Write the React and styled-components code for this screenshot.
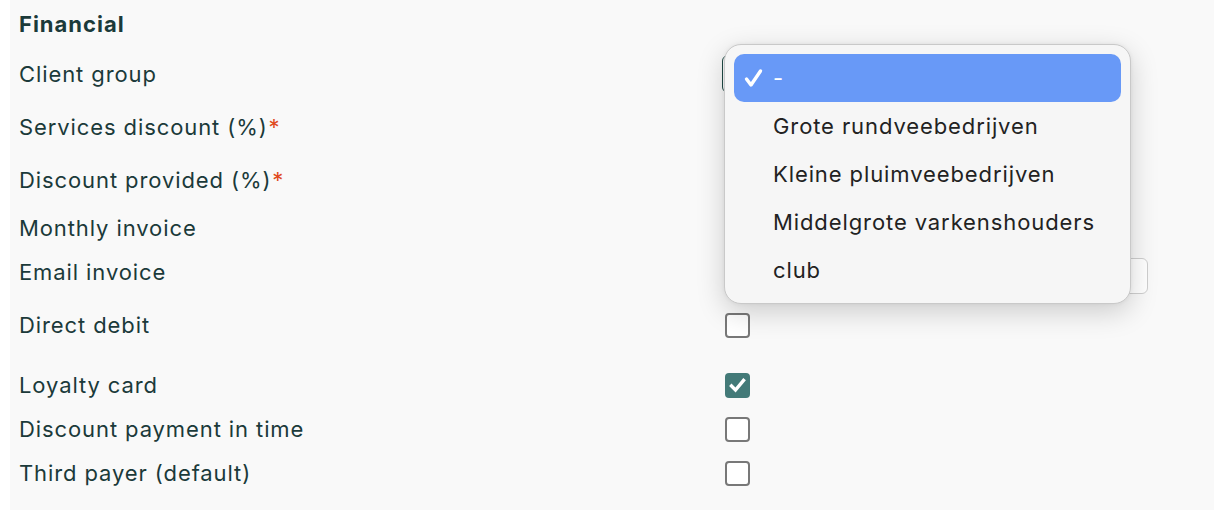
import React from "react";
import styled, { createGlobalStyle } from "styled-components";

const Global = createGlobalStyle`
  html, body { margin: 0; padding: 0; background: #ffffff; }
  body { font-family: Inter, "Noto Sans", sans-serif; }
`;

const Page = styled.div`
  width: 1214px;
  height: 510px;
  background: #ffffff;
  padding-left: 10px;
  box-sizing: border-box;
  overflow: hidden;
`;

const Panel = styled.div`
  position: relative;
  width: 1204px;
  height: 510px;
  background: #f9f9f9;
  padding-left: 9px;
  box-sizing: border-box;
  color: #1b3a3a;
  font-size: 22px;
  letter-spacing: 0.9px;
`;

const Row = styled.div`
  display: grid;
  grid-template-columns: 703px 1fr;
  align-items: center;
  height: ${(p) => p.h}px;
  margin-top: ${(p) => p.mt || 0}px;
`;

const Heading = styled.div`
  font-weight: 700;
  font-size: 22px;
  letter-spacing: 1px;
  height: 48px;
  display: flex;
  align-items: center;
`;

const Label = styled.div`
  white-space: nowrap;
`;

const Req = styled.span`
  color: #e0491c;
  margin-left: 1px;
`;

const Select = styled.div`
  width: 400px;
  height: 38px;
  border: 1.5px solid #1f4a46;
  border-radius: 6px;
  background: #fff;
  box-sizing: border-box;
`;

const Input = styled.div`
  width: ${(p) => p.w}px;
  height: 36px;
  margin-left: 4px;
  border: 1.5px solid #cfcfcf;
  border-radius: 6px;
  background: #fff;
  box-sizing: border-box;
  align-self: ${(p) => (p.top ? "start" : "center")};
  margin-top: ${(p) => p.top || 0}px;
`;

const Box = styled.div`
  width: 25px;
  height: 25px;
  margin-left: 3px;
  box-sizing: border-box;
  border-radius: 4px;
  border: ${(p) => (p.checked ? "none" : "2px solid #787878")};
  background: ${(p) => (p.checked ? "#437a78" : "#ffffff")};
  display: flex;
  align-items: center;
  justify-content: center;
`;

const Menu = styled.div`
  position: absolute;
  left: 714px;
  top: 44px;
  width: 407px;
  height: 260px;
  box-sizing: border-box;
  background: #f6f6f6;
  border: 1px solid #c9c9c9;
  border-radius: 17px;
  box-shadow: 0 8px 28px rgba(0, 0, 0, 0.18), 0 0 4px rgba(0, 0, 0, 0.06);
  padding: 9px 9px;
  display: flex;
  flex-direction: column;
  font-size: 22px;
  letter-spacing: 0.9px;
  color: #222222;
`;

const Option = styled.div`
  height: 48px;
  flex: 0 0 48px;
  display: flex;
  align-items: center;
  border-radius: 10px;
  background: ${(p) => (p.active ? "#6899f7" : "transparent")};
  color: ${(p) => (p.active ? "#ffffff" : "#222222")};
  padding-left: 39px;
  position: relative;
  white-space: nowrap;
`;

const Tick = styled.svg`
  position: absolute;
  left: 10px;
  top: 14px;
`;

const CheckIcon = () => (
  <svg width="17" height="15" viewBox="0 0 17 15">
    <path d="M2.5 8 L6.5 12 L14.5 2.5" fill="none" stroke="#fff" strokeWidth="3.4" strokeLinecap="square" />
  </svg>
);

export default function App() {
  return (
    <Page>
      <Global />
      <Panel>
        <Heading>Financial</Heading>
        <Row h={52}>
          <Label>Client group</Label>
          <Select />
        </Row>
        <Row h={54}>
          <Label>
            Services discount (%)<Req>*</Req>
          </Label>
          <Input w={300} />
        </Row>
        <Row h={52}>
          <Label>
            Discount provided (%)<Req>*</Req>
          </Label>
          <Input w={300} />
        </Row>
        <Row h={44}>
          <Label>Monthly invoice</Label>
          <Box />
        </Row>
        <Row h={44}>
          <Label>Email invoice</Label>
          <Input w={422} top={8} />
        </Row>
        <Row h={62}>
          <Label>Direct debit</Label>
          <Box />
        </Row>
        <Row h={44} mt={7}>
          <Label>Loyalty card</Label>
          <Box checked>
            <CheckIcon />
          </Box>
        </Row>
        <Row h={44}>
          <Label>Discount payment in time</Label>
          <Box />
        </Row>
        <Row h={44}>
          <Label>Third payer (default)</Label>
          <Box />
        </Row>

        <Menu>
          <Option active>
            <Tick width="19" height="20" viewBox="0 0 19 20">
              <path d="M2.5 11 L7 17 L16.5 3" fill="none" stroke="#fff" strokeWidth="3.4" strokeLinecap="round" strokeLinejoin="round" />
            </Tick>
            -
          </Option>
          <Option>Grote rundveebedrijven</Option>
          <Option>Kleine pluimveebedrijven</Option>
          <Option>Middelgrote varkenshouders</Option>
          <Option>club</Option>
        </Menu>
      </Panel>
    </Page>
  );
}
